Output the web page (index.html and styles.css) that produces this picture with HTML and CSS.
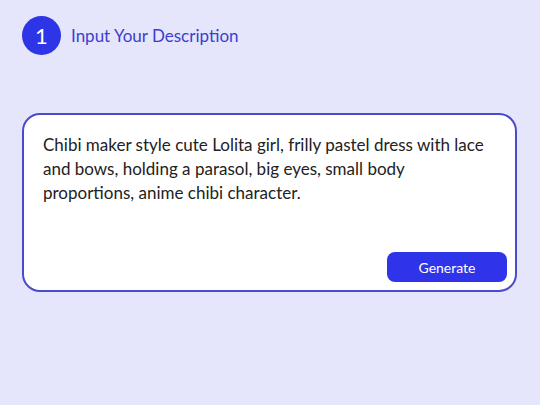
FILE: index.html
```html
<!DOCTYPE html>
<html>
<head>
<meta charset="utf-8">
<link rel="stylesheet" href="styles.css">
</head>
<body>
<div class="page">
  <div class="step">
    <div class="num">1</div>
    <div class="title">Input Your Description</div>
  </div>
  <div class="card">
    <p class="desc">Chibi maker style cute Lolita girl, frilly pastel dress with lace and bows, holding a parasol, big eyes, small body proportions, anime chibi character.</p>
    <div class="actions">
      <button class="btn">Generate</button>
    </div>
  </div>
</div>
</body>
</html>
```
FILE: styles.css
```css
html, body {
  margin: 0;
  padding: 0;
}
body {
  width: 540px;
  height: 405px;
  background: #e5e5fc;
  font-family: "Lato", "Noto Sans", sans-serif;
  overflow: hidden;
}
.page {
  padding: 16px 23px 0 22px;
  display: flex;
  flex-direction: column;
}
.step {
  display: flex;
  align-items: center;
  gap: 10px;
  height: 38px;
}
.num {
  width: 39px;
  height: 39px;
  border-radius: 50%;
  background: #2e35e6;
  color: #fff;
  display: flex;
  align-items: center;
  justify-content: center;
  font-size: 22px;
}
.title {
  color: #3b3fcf;
  font-size: 17px;
}
.card {
  margin-top: 59px;
  height: 179px;
  box-sizing: border-box;
  background: #fff;
  border: 2px solid #4c4acc;
  border-radius: 18px;
  padding: 18px 8px 8px 19px;
  display: flex;
  flex-direction: column;
}
.desc {
  margin: 0;
  color: #222;
  font-size: 17px;
  line-height: 24px;
  flex: 1;
  padding-right: 14px;
}
.actions {
  display: flex;
  justify-content: flex-end;
}
.btn {
  width: 120px;
  height: 30px;
  border: none;
  border-radius: 8px;
  background: #2f34ea;
  color: #fff;
  font-family: inherit;
  font-size: 14px;
  cursor: pointer;
}
```
